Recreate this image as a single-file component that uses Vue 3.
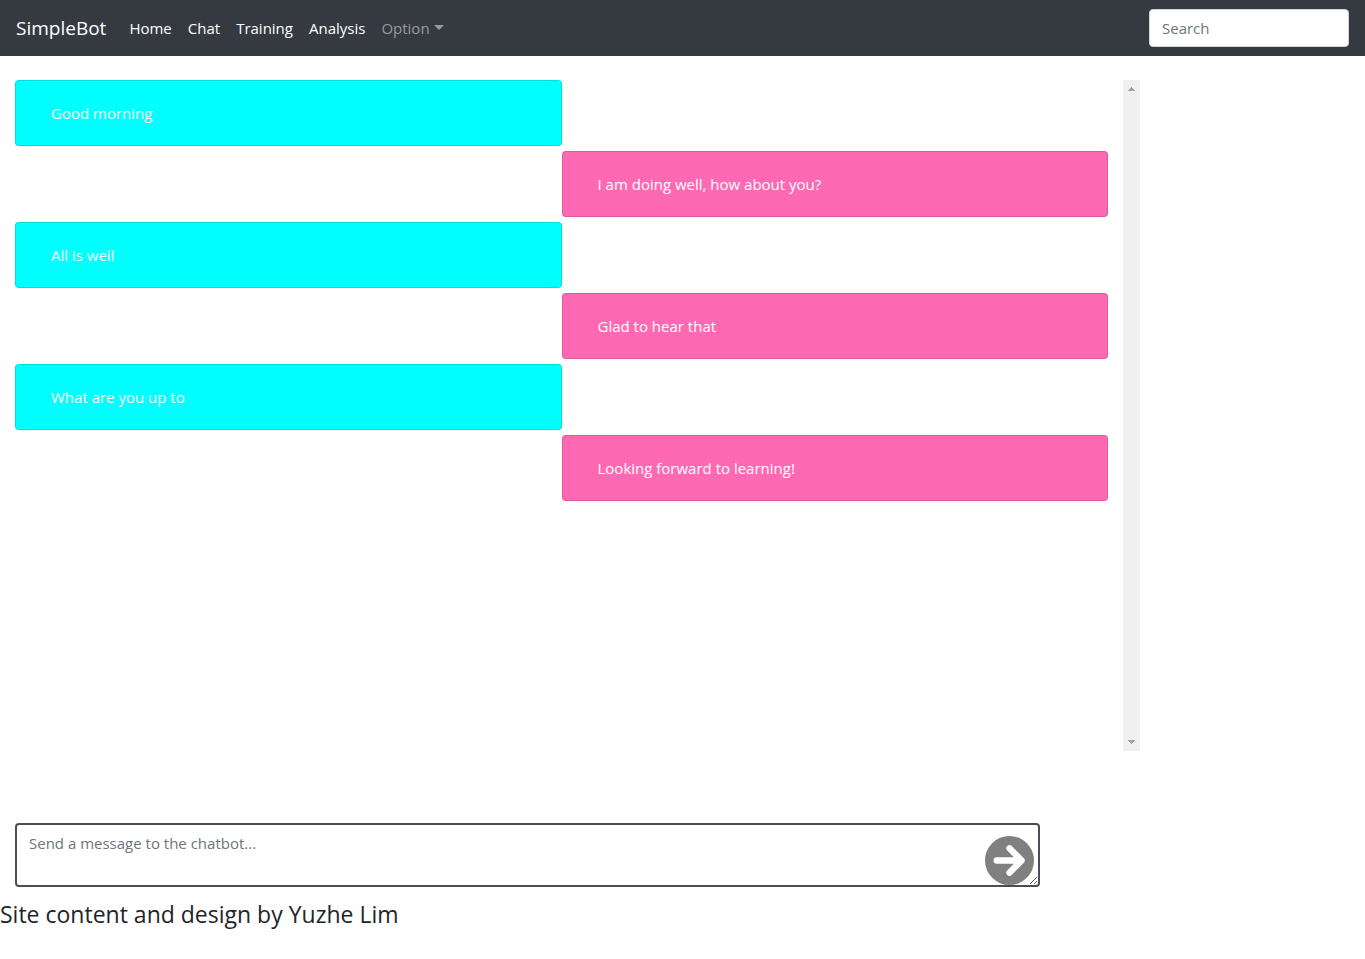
<script setup>
import { ref } from 'vue'

const links = ['Home', 'Chat', 'Training', 'Analysis']
const messages = [
  { from: 'user', text: 'Good morning' },
  { from: 'bot', text: 'I am doing well, how about you?' },
  { from: 'user', text: 'All is well' },
  { from: 'bot', text: 'Glad to hear that' },
  { from: 'user', text: 'What are you up to' },
  { from: 'bot', text: 'Looking forward to learning!' },
]
const query = ref('')
const draft = ref('')
</script>

<template>
  <div class="page">
    <header class="navbar">
      <a class="brand" href="#">SimpleBot</a>
      <nav class="links">
        <a v-for="link in links" :key="link" class="link" href="#">{{ link }}</a>
        <a class="link muted" href="#">Option<span class="caret"></span></a>
      </nav>
      <input v-model="query" class="search" type="search" placeholder="Search" aria-label="Search" />
    </header>

    <main class="container">
      <section class="chat">
        <div class="messages">
          <div v-for="(message, i) in messages" :key="i" class="bubble" :class="message.from">
            {{ message.text }}
          </div>
        </div>
        <div class="track" aria-hidden="true">
          <svg width="17" height="17" viewBox="0 0 17 17" shape-rendering="crispEdges">
            <path d="M8 7h1v1h1v1h1v1h1v1H5v-1h1V9h1V8h1z" fill="#a3a3a3" />
          </svg>
          <svg width="17" height="17" viewBox="0 0 17 17" shape-rendering="crispEdges">
            <path d="M5 6h7v1h-1v1h-1v1H9v1H8V9H7V8H6V7H5z" fill="#a3a3a3" />
          </svg>
        </div>
      </section>

      <form class="composer" @submit.prevent>
        <textarea v-model="draft" class="draft" placeholder="Send a message to the chatbot..." aria-label="Message"></textarea>
        <button class="send" type="submit" aria-label="Send">
          <svg viewBox="0 0 512 512" width="49" height="49">
            <circle cx="256" cy="256" r="256" fill="#808080" />
            <path d="M122 256H382M256 128L382 256L256 384" fill="none" stroke="#fff" stroke-width="66" stroke-linecap="round" stroke-linejoin="round" />
          </svg>
        </button>
      </form>
    </main>

    <footer class="footer">Site content and design by Yuzhe Lim</footer>
  </div>
</template>

<style>
body {
  margin: 0;
  background: #fff;
}
</style>

<style scoped>
.page,
.page * {
  box-sizing: border-box;
}
.page {
  font-family: "Open Sans", "Noto Sans", sans-serif;
  font-size: 15px;
  line-height: 24px;
  color: #212529;
}
.navbar {
  display: flex;
  align-items: center;
  height: 56px;
  padding: 0 16px;
  background: #343a40;
}
.brand {
  margin-right: 15px;
  font-size: 19px;
  line-height: 30px;
  color: #fff;
  text-decoration: none;
}
.links {
  display: flex;
  flex: 1;
}
.link {
  padding: 8px;
  color: #fff;
  text-decoration: none;
}
.link.muted {
  color: #999c9f;
}
.caret {
  display: inline-block;
  margin-left: 4px;
  vertical-align: 4px;
  border-top: 5px solid;
  border-right: 5px solid transparent;
  border-left: 5px solid transparent;
}
.search {
  width: 200px;
  height: 38px;
  padding: 6px 12px;
  border: 1px solid #ced4da;
  border-radius: 4px;
  background: #fff;
  font: inherit;
  color: #495057;
  appearance: none;
}
.search::placeholder,
.draft::placeholder {
  color: #6c757d;
  opacity: 1;
}
.container {
  max-width: 1140px;
  padding: 24px 0 0 15px;
}
.chat {
  display: flex;
  height: 70vh;
}
.messages {
  display: flex;
  flex: 1;
  flex-direction: column;
  gap: 5px;
  padding-right: 15px;
}
.bubble {
  width: 50%;
  padding: 20px 35px;
  border: 1px solid rgba(0, 0, 0, 0.125);
  border-radius: 4px;
  color: #fff;
}
.bubble.user {
  background: #00ffff;
}
.bubble.bot {
  align-self: flex-end;
  background: #ff69b4;
}
.track {
  display: flex;
  flex-direction: column;
  justify-content: space-between;
  width: 17px;
  background: #f0f0f0;
}
.track svg {
  display: block;
}
.composer {
  position: relative;
  margin: 72px 100px 0 0;
}
.draft {
  display: block;
  width: 100%;
  height: 64px;
  padding: 6px 12px;
  border: 2px solid #4a4d5a;
  border-radius: 4px;
  font: inherit;
  color: #495057;
  resize: vertical;
}
.send {
  position: absolute;
  right: 6px;
  bottom: 2px;
  padding: 0;
  border: 0;
  border-radius: 50%;
  background: none;
}
.send svg {
  display: block;
}
.footer {
  margin-top: 8px;
  font-size: 23px;
  line-height: 38px;
}
</style>
